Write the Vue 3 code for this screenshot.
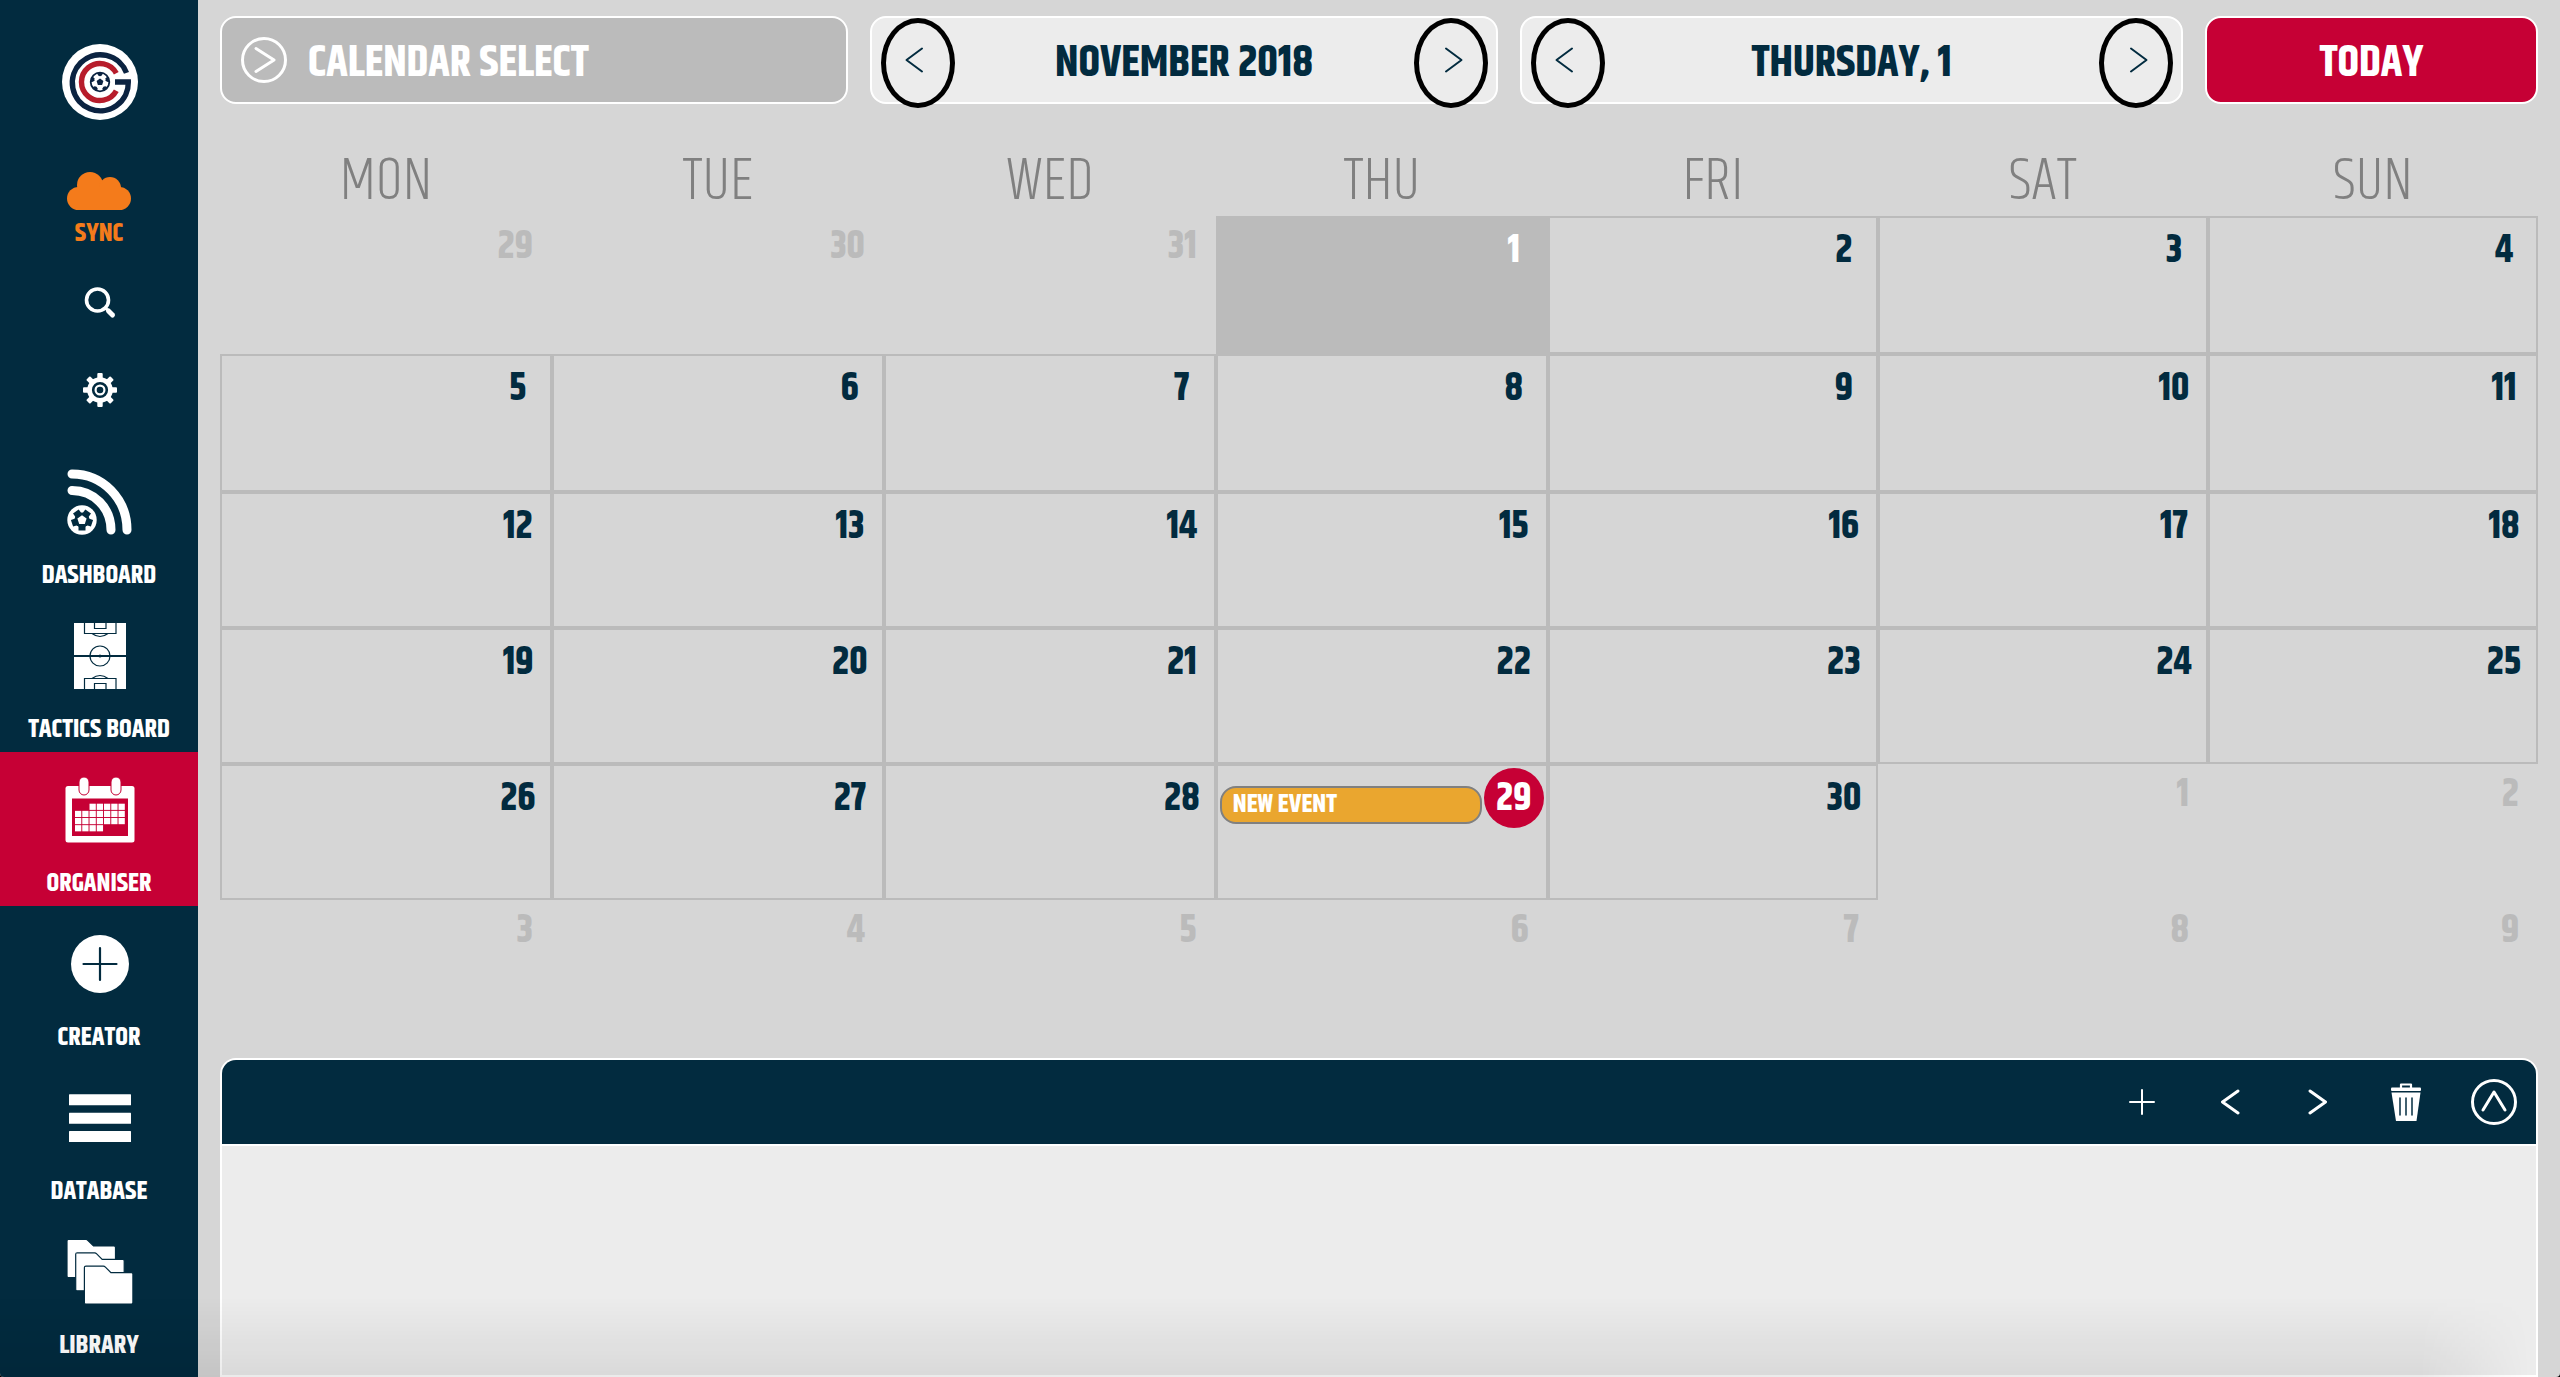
<script setup>
import { ref } from 'vue'

const weekdays = ['MON', 'TUE', 'WED', 'THU', 'FRI', 'SAT', 'SUN']

const active = ref('organiser')
const month = ref('NOVEMBER 2018')
const day = ref('THURSDAY, 1')

// october tail, november, december head
const days = [
  ...[29, 30, 31].map(n => ({ n, outside: true })),
  ...Array.from({ length: 30 }, (_, i) => ({
    n: i + 1,
    selected: i + 1 === 1,
    today: i + 1 === 29,
    event: i + 1 === 29 ? 'NEW EVENT' : ''
  })),
  ...Array.from({ length: 9 }, (_, i) => ({ n: i + 1, outside: true }))
]

const weeks = []
for (let i = 0; i < days.length; i += 7) {
  weeks.push(days.slice(i, i + 7))
}

// filled squares of the organiser icon: [column, row]
const squares = []
for (let row = 0; row < 4; row++) {
  for (let col = 0; col < 7; col++) {
    if (row === 0 && col < 2) continue
    if (row === 3 && col > 3) continue
    squares.push([col, row])
  }
}
</script>

<template>
  <div class="page">
    <aside class="sidebar">
      <svg class="logo" viewBox="-38 -38 76 76">
        <circle r="38" fill="#fff" />
        <path d="M26.5 -9.1A28 28 0 1 0 28.3 0H15" fill="none" stroke="#0b2341" stroke-width="5.4" />
        <path d="M16.3 -8.7A18.5 18.5 0 1 0 16.3 8.7" fill="none" stroke="#b71c2b" stroke-width="5.4" />
        <circle r="9.3" fill="#fff" stroke="#0b2341" stroke-width="1.8" />
        <path d="M0 -3.6L3.4 -1.1L2.1 2.9H-2.1L-3.4 -1.1Z" fill="#0b2341" />
        <g v-for="a in 5" :key="a" :transform="`rotate(${a * 72})`" fill="#0b2341">
          <path d="M-3.2 -9.2H3.2L1.8 -6.6L0 -5.8L-1.8 -6.6Z" />
        </g>
      </svg>

      <button class="sync">
        <svg width="64" height="38" viewBox="0 0 64 38" fill="#f47b1b">
          <circle cx="23" cy="13" r="13" />
          <circle cx="43" cy="16" r="11" />
          <circle cx="11.500" cy="26.500" r="11.500" />
          <circle cx="52.500" cy="26.500" r="11.500" />
          <path d="M11 15H53V38H11Z" />
        </svg>
        <span>SYNC</span>
      </button>

      <button class="tool" aria-label="Search">
        <svg width="34" height="34" viewBox="0 0 34 34" fill="none" stroke="#fff" stroke-linecap="round">
          <circle cx="14.500" cy="15" r="11" stroke-width="3.6" />
          <path d="M23 23.500L24.500 25" stroke-width="3" />
          <path d="M25.500 26L29.500 30" stroke-width="5" />
        </svg>
      </button>

      <button class="tool gear" aria-label="Settings">
        <svg width="34" height="34" viewBox="-17 -17 34 34">
          <g fill="#fff">
            <rect v-for="t in 8" :key="t" x="-2.700" y="-17" width="5.400" height="9" rx="1" :transform="`rotate(${t * 45})`" />
            <circle r="12.800" />
          </g>
          <circle r="6.800" fill="none" stroke="#022b3f" stroke-width="2.600" />
          <circle r="3.300" fill="#022b3f" />
        </svg>
      </button>

      <nav class="nav">
        <button :class="{ active: active === 'dashboard' }" @click="active = 'dashboard'">
          <svg width="66" height="66" viewBox="0 0 66 66">
            <g fill="none" stroke="#fff" stroke-width="9" stroke-linecap="round">
              <path d="M5 5C36 5 60 30 60 61" />
              <path d="M5 21.500C27 21.500 44 39 44 61" />
            </g>
            <g transform="translate(15 51)">
              <circle r="14.700" fill="#fff" />
              <circle r="7.600" fill="#022b3f" />
              <path v-for="a in 5" :key="a" d="M-3.500 -10.500H3.500V-6H-3.500Z" fill="#022b3f" :transform="`rotate(${a * 72 + 36})`" />
              <path d="M0 -4.800L4.600 -1.500L2.800 3.900H-2.800L-4.600 -1.500Z" fill="#fff" />
            </g>
          </svg>
          <span>DASHBOARD</span>
        </button>

        <button :class="{ active: active === 'tactics' }" @click="active = 'tactics'">
          <svg width="52" height="66" viewBox="0 0 52 66">
            <rect width="52" height="66" fill="#fff" />
            <g fill="none" stroke="#022b3f" stroke-width="1.200">
              <path d="M10.500 0V10.500H42V0M20.500 0V5.500H32V0M18 10.500Q26 16.500 34 10.500" />
              <path d="M10.500 66V55.500H42V66M20.500 66V60.500H32V66M18 55.500Q26 49.500 34 55.500" />
              <circle cx="26" cy="33" r="10" />
              <path d="M0 33H52" stroke-width="2" />
            </g>
            <circle cx="26" cy="33" r="1.500" fill="#022b3f" />
          </svg>
          <span>TACTICS BOARD</span>
        </button>

        <button :class="{ active: active === 'organiser' }" @click="active = 'organiser'">
          <svg width="70" height="66" viewBox="0 0 70 66">
            <rect x="0.500" y="9" width="69" height="56.500" rx="2.500" fill="#fff" />
            <rect x="7" y="21.500" width="56" height="37.500" fill="#c60035" />
            <rect x="14" y="0" width="10" height="18" rx="5" fill="#fff" stroke="#c60035" />
            <rect x="46" y="0" width="10" height="18" rx="5" fill="#fff" stroke="#c60035" />
            <rect v-for="s in squares" :key="s.join()" :x="10 + s[0] * 7.25" :y="26.7 + s[1] * 7.15" width="6.300" height="6.200" fill="#fff" />
          </svg>
          <span>ORGANISER</span>
        </button>

        <button :class="{ active: active === 'creator' }" @click="active = 'creator'">
          <svg width="66" height="66" viewBox="-33 -33 66 66">
            <circle r="29" fill="#fff" />
            <path d="M-16.500 0H16.500M0 -16V16" stroke="#022b3f" stroke-width="2.200" stroke-linecap="round" />
          </svg>
          <span>CREATOR</span>
        </button>

        <button :class="{ active: active === 'database' }" @click="active = 'database'">
          <svg width="62" height="66" viewBox="0 0 62 66" fill="#fff">
            <rect y="9.300" width="62" height="11" rx="0.500" />
            <rect y="27.700" width="62" height="11" rx="0.500" />
            <rect y="46" width="62" height="11" rx="0.500" />
          </svg>
          <span>DATABASE</span>
        </button>

        <button :class="{ active: active === 'library' }" @click="active = 'library'">
          <svg width="66" height="66" viewBox="0 0 66 66">
            <path
              v-for="i in 3"
              :key="i"
              d="M0 2Q0 0.500 1.500 0.500H19Q20 0.500 21 1.500L26.500 7H47Q48.500 7 48.500 8.500V37Q48.500 38.500 47 38.500H1.500Q0 38.500 0 37Z"
              fill="#fff"
              stroke="#022b3f"
              stroke-width="1.200"
              :transform="`translate(${(i - 1) * 8.7} ${(i - 1) * 13.3})`"
            />
          </svg>
          <span>LIBRARY</span>
        </button>
      </nav>
    </aside>

    <main class="content">
      <header class="topbar">
        <button class="box select">
          <svg width="48" height="48" viewBox="-24 -24 48 48" fill="none" stroke="#fff" stroke-width="3" stroke-linecap="round" stroke-linejoin="round">
            <circle r="21.500" />
            <path d="M-8 -11.500L10 0L-8 11.500" />
          </svg>
          <span>CALENDAR SELECT</span>
        </button>

        <div class="box stepper">
          <button class="arrow" aria-label="Previous month">
            <svg width="24" height="26" viewBox="-12 -13 24 26"><path d="M8 -11.500L-7.500 0L8 11.500" /></svg>
          </button>
          <h2>{{ month }}</h2>
          <button class="arrow" aria-label="Next month">
            <svg width="24" height="26" viewBox="-12 -13 24 26"><path d="M-8 -11.500L7.500 0L-8 11.500" /></svg>
          </button>
          <i class="ring left"></i>
          <i class="ring right"></i>
        </div>

        <div class="box stepper">
          <button class="arrow" aria-label="Previous day">
            <svg width="24" height="26" viewBox="-12 -13 24 26"><path d="M8 -11.500L-7.500 0L8 11.500" /></svg>
          </button>
          <h2>{{ day }}</h2>
          <button class="arrow" aria-label="Next day">
            <svg width="24" height="26" viewBox="-12 -13 24 26"><path d="M-8 -11.500L7.500 0L-8 11.500" /></svg>
          </button>
          <i class="ring left"></i>
          <i class="ring right"></i>
        </div>

        <button class="box today-btn"><span>TODAY</span></button>
      </header>

      <table class="calendar">
        <thead>
          <tr>
            <th v-for="name in weekdays" :key="name">{{ name }}</th>
          </tr>
        </thead>
        <tbody>
          <tr v-for="(week, w) in weeks" :key="w">
            <td v-for="(d, i) in week" :key="i" :class="{ outside: d.outside, selected: d.selected }">
              <div class="cell">
                <button v-if="d.event" class="event">{{ d.event }}</button>
                <span class="num" :class="{ today: d.today }">{{ d.n }}</span>
              </div>
            </td>
          </tr>
        </tbody>
      </table>

      <section class="panel">
        <div class="panel-bar">
          <button aria-label="Add">
            <svg width="26" height="26" viewBox="-13 -13 26 26"><path d="M-12 0H12M0 -12V12" stroke-width="2" /></svg>
          </button>
          <button aria-label="Previous">
            <svg width="24" height="26" viewBox="-12 -13 24 26"><path d="M8 -11L-7.500 0L8 11" /></svg>
          </button>
          <button aria-label="Next">
            <svg width="24" height="26" viewBox="-12 -13 24 26"><path d="M-8 -11L7.500 0L-8 11" /></svg>
          </button>
          <button aria-label="Delete">
            <svg width="30" height="38" viewBox="0 0 30 38">
              <path d="M10 5V1.500H20V5" stroke-width="2.200" />
              <rect y="4.500" width="30" height="3.500" rx="1" fill="#fff" stroke="none" />
              <path d="M0.500 9.500H29.500L25.500 38H5Z" fill="#fff" stroke="none" />
              <path d="M9 15V32M15 15V32M21 15V32" class="slots" />
            </svg>
          </button>
          <button aria-label="Expand">
            <svg width="48" height="48" viewBox="-24 -24 48 48">
              <circle r="21.500" />
              <path d="M-11 8L0 -10L11 8" />
            </svg>
          </button>
        </div>
        <div class="panel-body"></div>
      </section>
    </main>
  </div>
</template>

<style>
html {
  background: #000;
}

body {
  margin: 0;
}
</style>

<style scoped>
.page {
  position: relative;
  display: flex;
  min-height: 100vh;
  overflow: hidden;
  border-radius: 0 0 4px 4px;
  background: #d6d6d6;
  color: #022b3f;
  font-family: "Khand", "Roboto Condensed", "Liberation Sans Narrow", "Liberation Sans", sans-serif;
  font-weight: bold;
}

/* soft shade along the bottom of the window */
.page::after {
  content: '';
  position: absolute;
  left: 0;
  right: 0;
  bottom: 0;
  height: 80px;
  background: linear-gradient(transparent, rgba(0, 0, 0, 0.08));
  mask-image: linear-gradient(to left, transparent 30px, #000 140px);
  pointer-events: none;
}

button {
  box-sizing: border-box;
  margin: 0;
  padding: 0;
  border: 0;
  background: none;
  color: inherit;
  font: inherit;
  cursor: pointer;
}

svg {
  display: block;
  flex: none;
}

.sidebar {
  display: flex;
  flex-direction: column;
  align-items: center;
  flex: none;
  width: 198px;
  padding-top: 44px;
  background: #022b3f;
  color: #fff;
  font-size: 26px;
  line-height: 28px;
}

.logo {
  width: 76px;
  height: 76px;
}

.logo,
.tool svg,
.nav svg {
  margin-left: 2px;
}

.sync {
  display: flex;
  flex-direction: column;
  align-items: center;
  gap: 10px;
  margin-top: 52px;
  color: #f47b1b;
}

.tool {
  margin-top: 37px;
}

.gear {
  margin-top: 54px;
}

.nav {
  display: flex;
  flex-direction: column;
  width: 100%;
  margin-top: 37px;
}

.nav button {
  display: flex;
  flex-direction: column;
  align-items: center;
  gap: 27px;
  height: 154px;
  padding-top: 25px;
}

.nav .active {
  background: #c60035;
}

.content {
  display: flex;
  flex-direction: column;
  flex: 1;
  min-width: 0;
  padding: 16px 22px 0;
}

.topbar {
  display: grid;
  grid-template-columns: 628fr 628fr 663fr 333fr;
  gap: 22px;
  font-size: 44px;
}

.box {
  box-sizing: border-box;
  height: 88px;
  border: 2px solid #fff;
  border-radius: 16px;
  background: #ececec;
}

.box h2,
.box span {
  padding-top: 6px;
}

.select {
  display: flex;
  align-items: center;
  gap: 20px;
  padding-left: 18px;
  background: #bbb;
  color: #fff;
}

.stepper {
  position: relative;
  display: flex;
  align-items: center;
  justify-content: space-between;
}

.stepper h2 {
  margin: 0;
  font-size: inherit;
}

.arrow {
  display: flex;
  align-items: center;
  justify-content: center;
  width: 84px;
  height: 84px;
}

.arrow path {
  fill: none;
  stroke: #022b3f;
  stroke-width: 2;
  stroke-linecap: round;
  stroke-linejoin: round;
}

.ring {
  position: absolute;
  top: 0;
  box-sizing: border-box;
  width: 74px;
  height: 90px;
  border: 5px solid #000;
  border-radius: 50%;
  pointer-events: none;
}

.ring.left {
  left: 9px;
}

.ring.right {
  right: 8px;
}

.today-btn {
  display: flex;
  align-items: center;
  justify-content: center;
  background: #c60035;
  color: #fff;
}

.calendar {
  width: 100%;
  margin-top: 46px;
  border-spacing: 0;
  table-layout: fixed;
}

.calendar th {
  width: 14.24%;
  height: 64px;
  padding: 0 0 2px;
  color: #808080;
  font-size: 60px;
  font-weight: 300;
  line-height: 64px;
}

.calendar th:nth-child(-n + 4) {
  width: 14.32%;
}

.calendar td {
  box-sizing: border-box;
  height: 136px;
  padding: 0;
  border: 2px solid #bbb;
  vertical-align: top;
}

.calendar tr:nth-child(-n + 2) td {
  height: 138px;
}

.calendar .selected {
  background: #bbb;
  color: #fff;
}

.calendar .outside {
  border: 0;
  color: #bbb;
}

.cell {
  display: flex;
  align-items: flex-start;
  justify-content: flex-end;
  gap: 2px;
  padding: 2px;
}

.num {
  flex: none;
  width: 60px;
  height: 60px;
  font-size: 39px;
  line-height: 62px;
  text-align: center;
}

.num.today {
  border-radius: 50%;
  background: #c60035;
  color: #fff;
}

.outside .num {
  width: auto;
  padding-right: 17px;
  line-height: 58px;
}

.event {
  flex: 1;
  height: 38px;
  margin-top: 18px;
  padding: 0 11px;
  border: 2px solid #808080;
  border-radius: 16px;
  background: #eaa62f;
  color: #fff;
  font-size: 26px;
  line-height: 34px;
  text-align: left;
}

.panel {
  display: flex;
  flex-direction: column;
  flex: 1;
  margin-top: 22px;
  overflow: hidden;
  border: 2px solid #fff;
  border-radius: 16px 16px 0 0;
  background: #ececec;
}

.panel-bar {
  display: flex;
  justify-content: flex-end;
  height: 84px;
  margin-right: -2px;
  border-bottom: 2px solid #fff;
  background: #022b3f;
}

.panel-bar button {
  display: flex;
  align-items: center;
  justify-content: center;
  width: 88px;
}

.panel-bar svg {
  fill: none;
  stroke: #fff;
  stroke-width: 3;
  stroke-linecap: round;
  stroke-linejoin: round;
}

.panel-bar .slots {
  stroke: #022b3f;
  stroke-width: 1.5;
}

.panel-body {
  flex: 1;
  min-height: 200px;
}
</style>
